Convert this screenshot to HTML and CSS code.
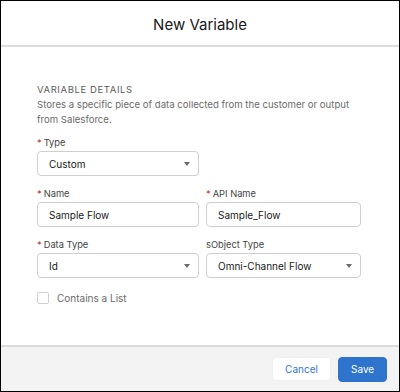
FILE: index.html
```html
<!DOCTYPE html>
<html lang="en">
<head>
<meta charset="utf-8">
<title>New Variable</title>
<link rel="stylesheet" href="styles.css">
</head>
<body>
<div class="modal">
  <header class="modal-header">
    <h2 class="modal-title">New Variable</h2>
  </header>
  <main class="modal-body">
    <h3 class="section-title">Variable Details</h3>
    <p class="section-desc">Stores a specific piece of data collected from the customer or output from Salesforce.</p>

    <div class="grid">
      <div class="field">
        <label class="label"><abbr class="req">*</abbr>Type</label>
        <div class="control select">Custom<span class="caret"></span></div>
      </div>
      <div></div>

      <div class="field">
        <label class="label"><abbr class="req">*</abbr>Name</label>
        <div class="control">Sample Flow</div>
      </div>
      <div class="field">
        <label class="label"><abbr class="req">*</abbr>API Name</label>
        <div class="control">Sample_Flow</div>
      </div>

      <div class="field">
        <label class="label"><abbr class="req">*</abbr>Data Type</label>
        <div class="control select">Id<span class="caret"></span></div>
      </div>
      <div class="field">
        <label class="label">sObject Type</label>
        <div class="control select">Omni-Channel Flow<span class="caret"></span></div>
      </div>
    </div>

    <div class="checkbox-row">
      <span class="checkbox"></span>
      <span class="checkbox-label">Contains a List</span>
    </div>
  </main>
  <footer class="modal-footer">
    <button class="btn btn-neutral">Cancel</button>
    <button class="btn btn-brand">Save</button>
  </footer>
</div>
</body>
</html>
```

FILE: styles.css
```css
* { box-sizing: border-box; }
html, body { margin: 0; padding: 0; background: #fff; }
body { font-family: Inter, "Liberation Sans", Arial, sans-serif; color: #181818; }

.modal {
  width: 400px;
  height: 392px;
  border: 1px solid #000;
  display: flex;
  flex-direction: column;
  background: #fff;
}

.modal-header {
  height: 46px;
  border-bottom: 2px solid #dcdcdc;
  display: flex;
  align-items: center;
  justify-content: center;
  padding-top: 2px;
}
.modal-title {
  margin: 0;
  font-size: 15px;
  font-weight: 400;
  color: #181818;
}

.modal-body {
  flex: 1;
  padding: 36px 0 0 36px;
}

.section-title {
  margin: 0;
  font-size: 9.5px;
  font-weight: 400;
  letter-spacing: 0.6px;
  text-transform: uppercase;
  color: #5c5c5c;
  line-height: 14px;
}
.section-desc {
  margin: 0;
  width: 330px;
  font-size: 9.6px;
  line-height: 15px;
  color: #6b6b6b;
}

.grid {
  margin-top: 8px;
  display: grid;
  grid-template-columns: 162px 155px;
  column-gap: 7px;
  row-gap: 10px;
}

.label {
  display: block;
  height: 16px;
  line-height: 16px;
  font-size: 9.3px;
  color: #444;
}
.req {
  color: #c23934;
  text-decoration: none;
  margin-right: 2px;
  border: 0;
}

.control {
  position: relative;
  height: 25px;
  border: 1px solid #cfcfcf;
  border-radius: 4px;
  padding: 0 11px;
  display: flex;
  align-items: center;
  font-size: 10px;
  color: #181818;
  background: #fff;
}
.caret {
  position: absolute;
  right: 8px;
  top: 10px;
  width: 0;
  height: 0;
  border-left: 3.5px solid transparent;
  border-right: 3.5px solid transparent;
  border-top: 4px solid #6b6b6b;
}

.checkbox-row {
  margin-top: 14px;
  display: flex;
  align-items: center;
  gap: 8px;
}
.checkbox {
  width: 12px;
  height: 12px;
  border: 1px solid #cfcfcf;
  border-radius: 2px;
  background: #fff;
}
.checkbox-label {
  font-size: 10px;
  color: #6b6b6b;
}

.modal-footer {
  height: 46px;
  border-top: 2px solid #dcdcdc;
  background: #f3f3f3;
  display: flex;
  align-items: center;
  justify-content: flex-end;
  gap: 7px;
  padding: 0 12px 0 0;
}
.btn {
  height: 24px;
  border-radius: 4px;
  font-family: inherit;
  font-size: 10px;
  border: 1px solid transparent;
  padding: 0 12px;
  cursor: pointer;
}
.btn-neutral {
  width: 59px;
  background: #fff;
  border-color: #f0f0f0;
  color: #2f77cf;
}
.btn-brand {
  width: 49px;
  height: 25px;
  background: #2f74cc;
  border-color: #2f74cc;
  color: #fff;
}
```
